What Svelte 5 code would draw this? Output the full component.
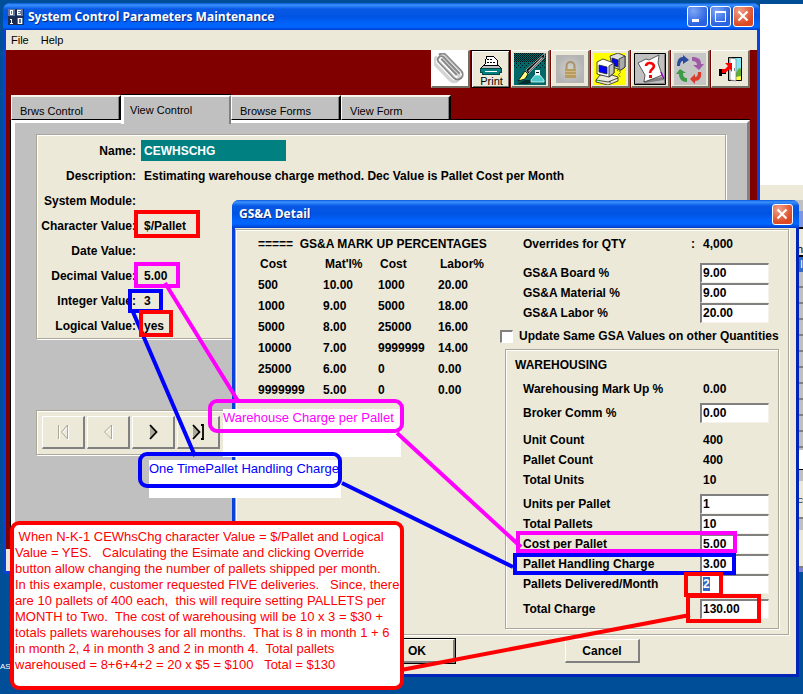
<script>
  const tabs = ['Brws Control', 'View Control', 'Browse Forms', 'View Form'];
  const fields = [
    ['Description:', 'Estimating warehouse charge method. Dec Value is Pallet Cost per Month'],
    ['System Module:', ''],
    ['Character Value:', '$/Pallet'],
    ['Date Value:', ''],
    ['Decimal Value:', '5.00'],
    ['Integer Value:', '3'],
    ['Logical Value:', 'yes']
  ];
  const markup = [
    ['500', '10.00', '1000', '20.00'],
    ['1000', '9.00', '5000', '18.00'],
    ['5000', '8.00', '25000', '16.00'],
    ['10000', '7.00', '9999999', '14.00'],
    ['25000', '6.00', '0', '0.00'],
    ['9999999', '5.00', '0', '0.00']
  ];
  const overrides = [
    ['board', 'GS&A Board %', '9.00'],
    ['material', 'GS&A Material %', '9.00'],
    ['labor', 'GS&A Labor %', '20.00']
  ];
  const counts = [
    ['Unit Count', '400'],
    ['Pallet Count', '400'],
    ['Total Units', '10']
  ];
  const pallets = [
    ['upp', 'Units per Pallet', '1'],
    ['total', 'Total Pallets', '10'],
    ['cost', 'Cost per Pallet', '5.00'],
    ['handling', 'Pallet Handling Charge', '3.00'],
    ['delivered', 'Pallets Delivered/Month', '2']
  ];
  const note = [
    ' When N-K-1 CEWhsChg character Value = $/Pallet and Logical',
    'Value = YES.   Calculating the Esimate and clicking Override',
    'button allow changing the number of pallets shipped per month.',
    'In this example, customer requested FIVE deliveries.   Since, there',
    'are 10 pallets of 400 each,  this will require setting PALLETS per',
    'MONTH to Two.  The cost of warehousing will be 10 x 3 = $30 +',
    'totals pallets warehouses for all months.  That is 8 in month 1 + 6',
    'in month 2, 4 in month 3 and 2 in month 4.  Total pallets',
    'warehoused = 8+6+4+2 = 20 x $5 = $100   Total = $130'
  ].join('\n');
</script>

<main class="desktop">
  <aside class="behind">
    <div class="blank"></div>
    <div class="strip beige"></div>
    <div class="strip grey"></div>
    <div class="strip lav"></div>
    <div class="strip head">h</div>
    <div class="strip sel">I</div>
    <div class="rows"></div>
    <div class="strip white"></div>
    <div class="strip grey"></div>
    <div class="strip foot">C</div>
    <div class="strip grey"></div>
    <div class="strip foot"></div>
  </aside>
  <span class="deskicon">AS</span>

  <section class="window main">
    <header class="title">
      <svg width="16" height="16" viewBox="0 0 16 16" shape-rendering="crispEdges">
        <path fill="#1b2b52" d="M0 0h16v16H0z" /><path fill="#62779a" d="M0 0h7v7H0zM9 0h6v7H9zM9 9h6v6H9z" />
        <path fill="none" stroke="#fff" d="M2.500 1.500h2v4h-2zM13 1.500h-3.500v4H13M10 3.500h2M2 10.500h1.500v4M2 14.500h3M10.500 9.500h3v5h-3z" />
      </svg>
      <h1>System Control Parameters Maintenance</h1>
      <button class="cap" aria-label="Minimize"><svg width="21" height="21"><path fill="#fff" d="M5 13h7v3H5z" /></svg></button>
      <button class="cap" aria-label="Maximize"><svg width="21" height="21"><path fill="none" stroke="#fff" d="M5 6.500h10M5.500 5v10.500h10V5M5 5.500h11" /></svg></button>
      <button class="cap close" aria-label="Close"><svg width="21" height="21"><path stroke="#fff" stroke-width="2.200" d="M5.500 5.500l9 9M14.500 5.500l-9 9" /></svg></button>
    </header>
    <nav class="menu"><button>File</button><button>Help</button></nav>
    <div class="client">
      <div class="tools">
        <button class="tool paper" aria-label="Attach">
          <svg width="32" height="32" viewBox="0 0 32 32" fill="none">
            <g transform="rotate(46 16 15)" stroke-linecap="round">
              <path stroke="#d4d4d4" stroke-width="3.500" d="M5 13h20a5 5 0 0 1 0 10H4a5 5 0 0 1-5-5" />
              <path stroke="#888" stroke-width="2" d="M26 12H4a3 3 0 0 0 0 7h22a5 5 0 0 0 0-10H3a5 5 0 0 0-4 4M4 15h21" />
              <path stroke="#c8c8c8" stroke-width="1" d="M3 10h23M4 18h22" />
            </g>
          </svg>
        </button>
        <button class="tool print">
          <svg width="32" height="22" viewBox="0 0 32 22" shape-rendering="crispEdges">
            <path fill="#fff" stroke="#000" d="M12.500 2.500h7l4 4v6h-13z" />
            <path stroke="#000" stroke-dasharray="2 1" d="M13 5.500h5M13 8.500h8" />
            <path fill="#c0c0c0" stroke="#000" d="M9.500 11.500h15l3 3h-21z" />
            <path fill="#008080" stroke="#004848" d="M6.500 14.500h21v4h-2v2h-17v-2h-2z" /><path fill="#fff" d="M11 17h12v1H11z" />
          </svg>
          <span>Print</span>
        </button>
        <button class="tool" aria-label="Sign">
          <svg width="32" height="32" viewBox="0 0 32 32">
            <defs><pattern id="dots" width="2" height="2" patternUnits="userSpaceOnUse"><path fill="#001818" d="M0 0h1v1H0zM1 1h1v1H1z" /></pattern>
            <pattern id="sparse" width="4" height="4" patternUnits="userSpaceOnUse"><path fill="#001818" d="M0 0h1v1H0zM2 2h1v1H2z" /></pattern></defs>
            <path fill="#006868" d="M0 0h32v32H0z" /><path fill="url(#dots)" d="M0 0h32v9H0z" /><path fill="url(#sparse)" d="M0 9h32v7H0z" />
            <path fill="#002c2c" d="M3 31l8-4h12l-9 4z" />
            <path fill="#000" stroke="#d8d8d8" stroke-width=".7" d="M31 0L12 17l2 4L30 5z" />
            <path fill="#c0c0c0" d="M28 4L14 18l1 1L29 5z" />
            <path fill="#ffff80" stroke="#000" stroke-width=".8" d="M11 18l3 3-3 5-7 2z" />
            <path fill="#fff" d="M21 17h5v5h-5z" /><path fill="#48c8c8" stroke="#fff" stroke-width=".7" d="M21 22h5l4 5v2H17v-2z" /><path fill="#000" d="M22 19h3v1h-3z" />
          </svg>
        </button>
        <button class="tool" aria-label="Lock">
          <svg width="32" height="32" viewBox="0 0 32 32">
            <defs><radialGradient id="lk"><stop offset="0" stop-color="#d2d1cd" /><stop offset="1" stop-color="#b4b4b4" /></radialGradient></defs>
            <path fill="url(#lk)" d="M2 2h28v28H2z" />
            <path fill="none" stroke="#a89468" stroke-width="2" d="M12.500 16v-3a4 4 0 0 1 8 0v3" />
            <path fill="#b89c60" d="M11 16h11v9H11z" /><path stroke="#cfb984" d="M11 18.500h11M11 21.500h11" />
          </svg>
        </button>
        <button class="tool" aria-label="Transfer">
          <svg width="32" height="32" viewBox="0 0 32 32">
            <path fill="#ff0" d="M0 0h32v32H0z" />
            <g stroke="#222" stroke-width=".8" stroke-linejoin="round">
              <path fill="#ddd" d="M16 3l8-3 7 3v11l-4 3-9-3z" /><path fill="#00f" d="M18 5l6 2v7l-6-2z" /><path fill="#aaa" d="M25 6l6-3v11l-4 3h-2z" />
              <path fill="#ece9d8" d="M2 27l4-5h12l6 2v4l-10 4-12-3z" /><path fill="none" d="M2 27l12 2 10-4M16 28v2" />
              <path fill="#fff" d="M3 9l6-3 11 4v10l-5 4-12-3z" /><path fill="#c0c0c0" d="M15 13l5-3v10l-5 4z" />
              <path fill="#00f" d="M5 12l8 2v7l-8-2z" />
            </g>
            <path fill="none" stroke="#333" stroke-dasharray="1 1" d="M23 17l4 2-3 3 3 2" /><path fill="#0d0" d="M3 27h2v1H3z" />
          </svg>
        </button>
        <button class="tool" aria-label="Help topic">
          <svg width="32" height="32" viewBox="0 0 32 32">
            <path fill="#c0c0c0" stroke="#000" d="M.5.5h31v31H.5z" /><path fill="none" stroke="#808080" d="M1.500 30.500h29v-29" />
            <path fill="#808080" d="M9 28l19-4 2 3-19 3z" />
            <path fill="#fff" stroke="#222" stroke-width=".7" d="M4 10l8-4 3 1 10-5-1 8 4 12-7 3-11 4 1-7z" />
            <path fill="none" stroke="#f00" stroke-width="2.600" d="M12 13c0-4 7-4 8 0 0 3-4 3-4 7" /><path fill="#f00" d="M15 22h3v3h-3z" />
            <path stroke="#a000c0" stroke-width="1.500" d="M27 19l3 7" />
          </svg>
        </button>
        <button class="tool" aria-label="Refresh">
          <svg width="32" height="32" viewBox="0 0 32 32">
            <path fill="#c6c6c6" d="M0 0h32v32H0z" />
            <path fill="#2b4a9b" d="M3 13C3 7 5 4 9 4V2l6 5-6 4V8C7 8 6 10 6 13z" />
            <path fill="#a05aa8" d="M18 4c6 0 9 2 9 7h3l-5 6-6-5h4c0-3-2-4-5-4z" />
            <path fill="#dc3c2c" d="M27 19c1 6-2 9-6 9v3l-5-5 5-5v3c2 0 3-2 3-5z" />
            <path fill="#3c9c44" d="M13 29c-5 0-8-3-8-8H2l4-5 6 4H9c0 3 1 5 4 5z" />
          </svg>
        </button>
        <button class="tool" aria-label="Exit">
          <svg width="32" height="32" viewBox="0 0 32 32">
            <path fill="#7fe8f4" stroke="#000" d="M14.500 4.500h13v23h-13z" />
            <path fill="#ff4" d="M22 23h5v4h-5z" /><path fill="#5cb030" d="M22 20l3-5 2 1v7l-5 1z" />
            <path fill="#fff" stroke="#777" stroke-width=".7" d="M16 5l6 1v22l-6-1z" /><path fill="#888" d="M20 15h1v3h-1z" />
            <path fill="#000" d="M5 16h3v7H5zM8 21h4v-4H8z" />
            <path fill="#f00" d="M8 16h3l3-3-3-3h7v9l-2-3-5 4H8z" />
          </svg>
        </button>
      </div>
      <div class="tabs" role="tablist">
        {#each tabs as t, i}
          <button role="tab" class:active={i === 1} aria-selected={i === 1}>{t}</button>
        {/each}
      </div>
      <div class="page">
        <div class="groove record">
          <label for="name">Name:</label>
          <input id="name" value="CEWHSCHG" />
          {#each fields as [k, v]}
            <span class="key">{k}</span><span>{v}</span>
          {/each}
        </div>
        <div class="groove nav">
          <button aria-label="First" disabled><svg width="16" height="16" fill="none" stroke="#aca899"><path stroke="#fff" d="M4.500 2v14M13.500 2v14l-6-7z" /><path d="M3.500 1v14M12.500 1v14l-6-7z" /></svg></button>
          <button aria-label="Previous" disabled><svg width="16" height="16" fill="none" stroke="#aca899"><path stroke="#fff" d="M12.500 2v14l-7-7z" /><path d="M11.500 1v14l-7-7z" /></svg></button>
          <button aria-label="Next"><svg width="16" height="16"><path fill="#aca899" d="M5 1v14l6-7z" /><path fill="none" stroke="#000" stroke-width="1.800" d="M5 1l6.500 7L5 15" /></svg></button>
          <button aria-label="Last"><svg width="16" height="16"><path fill="#aca899" d="M3 1v14l6-7z" /><path fill="none" stroke="#000" stroke-width="1.800" d="M3 1l6.500 7L3 15M11 1h2v14h-2" /></svg></button>
        </div>
      </div>
    </div>
    <footer class="status"></footer>
  </section>

  <section class="window dialog">
    <header class="title">
      <h2>GS&amp;A Detail</h2>
      <button class="cap close" aria-label="Close dialog"><svg width="21" height="21"><path stroke="#fff" stroke-width="2.200" d="M5.500 5.500l9 9M14.500 5.500l-9 9" /></svg></button>
    </header>
    <div class="body">
      <div class="groove detail">
        <div class="rates">
          <h3>=====&nbsp; GS&amp;A MARK UP PERCENTAGES</h3>
          <table>
            <thead><tr><th>Cost</th><th>Mat'l%</th><th>Cost</th><th>Labor%</th></tr></thead>
            <tbody>
              {#each markup as row}
                <tr>{#each row as c}<td>{c}</td>{/each}</tr>
              {/each}
            </tbody>
          </table>
        </div>
        <form class="over" onsubmit={(e) => e.preventDefault()}>
          <div class="row qty"><span>Overrides for QTY</span><span class="colon">:</span><span class="val">4,000</span></div>
          {#each overrides as [id, k, v]}
            <div class="row"><label for={id}>{k}</label><input {id} value={v} /></div>
          {/each}
          <div class="check"><input type="checkbox" id="same" /><label for="same">Update Same GSA Values on other Quantities</label></div>
          <div class="groove ware">
            <h3>WAREHOUSING</h3>
            <div class="row gap"><span>Warehousing Mark Up %</span><span class="val">0.00</span></div>
            <div class="row gap"><label for="broker">Broker Comm %</label><input id="broker" value="0.00" /></div>
            {#each counts as [k, v]}
              <div class="row"><span>{k}</span><span class="val">{v}</span></div>
            {/each}
            <div class="block">
              {#each pallets as [id, k, v]}
                <div class="row"><label for={id}>{k}</label><input {id} value={v} class:selected={id === 'delivered'} /></div>
              {/each}
            </div>
            <div class="row"><label for="charge">Total Charge</label><input id="charge" value="130.00" /></div>
          </div>
        </form>
      </div>
      <div class="actions"><button class="ok">OK</button><button>Cancel</button></div>
    </div>
  </section>

  <p class="memo pink">Warehouse Charge per Pallet</p>
  <p class="memo blue">One TimePallet Handling Charge</p>
  <p class="memo red">{note}</p>

  <svg class="marks" width="803" height="694" viewBox="0 0 803 694" fill="none" stroke-width="4">
    <g stroke="#f0f">
      <rect x="136" y="264" width="42" height="22" />
      <rect x="518" y="533" width="217" height="18" />
      <rect x="210" y="401" width="192" height="30" rx="7" />
      <path d="M165 283L238 401M397 433L521 547" />
    </g>
    <g stroke="#00f">
      <rect x="130" y="291" width="31" height="20" />
      <rect x="515" y="555" width="219" height="18" />
      <rect x="140" y="454" width="200" height="32" rx="7" />
      <path d="M133 312L195 456M342 483L513 567" />
    </g>
    <g stroke="#f00">
      <rect x="136" y="212" width="62" height="24" />
      <rect x="141" y="312" width="30" height="23" />
      <rect x="686" y="574" width="35" height="21" />
      <rect x="688" y="596" width="71" height="25" />
      <rect x="12" y="523" width="390" height="165" rx="7" />
      <path d="M401 670L690 615" />
    </g>
  </svg>
</main>

<style>
  :global(body) { background: #004e98; }
  .desktop {
    position: relative; min-height: 100vh; overflow: hidden; background: #004e98;
    font: bold 12px/20px "Liberation Sans", Arial, sans-serif; color: #000;
  }
  .desktop * { box-sizing: border-box; }
  h1, h2, h3, p { margin: 0; font: inherit; }
  button, input { font: inherit; color: inherit; border-radius: 0; }
  svg { display: block; flex: none; }

  .behind {
    position: absolute; left: 760px; right: 0; top: 4px; border-bottom: 4px solid #8080d0;
    background: #ece9d8; font-weight: normal; font-size: 11px; text-align: right;
  }
  .blank { height: 181px; background: #fff; }
  .strip { height: 15px; line-height: 20px; }
  .strip.grey { background: #c0c0c0; height: 11px; }
  .strip.lav { background: #7e96e0; height: 18px; border-bottom: 2px solid #000; }
  .strip.head { height: 28px; line-height: 40px; border-bottom: 2px solid #000; }
  .strip.sel { background: #316ac5; color: #fff; line-height: 15px; }
  .rows { height: 178px; background: repeating-linear-gradient(#c0c0c0 0 14px, #808080 14px 16px); }
  .strip.white { background: #fff; height: 20px; border-bottom: 1px solid #000; }
  .strip.foot { height: 38px; line-height: 40px; font-size: 8px; border-bottom: 2px solid #808080; }
  .deskicon { position: absolute; left: 0; top: 657px; color: #fff; font-weight: normal; font-size: 8px; }

  .window { position: absolute; border: 3px solid #0842d8; border-top: 0; border-radius: 7px 7px 0 0; background: #ece9d8; }
  .main { left: 3px; top: 3px; width: 757px; }
  .dialog { left: 232px; top: 200px; width: 567px; border-right-color: #0024b8; border-bottom-color: #0024b8; }
  .title {
    display: flex; align-items: center; gap: 2px; height: 27px; margin: 0 -3px; padding: 0 6px 0 5px; border-radius: 7px 7px 0 0;
    background: linear-gradient(#0a58d8, #3a92ff 2px, #0858e4 6px, #0054e3 14px, #0062fa 20px, #0066ff 24px, #003ccb);
    color: #fff; text-shadow: 1px 1px #0a2a80;
  }
  .title h1, .title h2 { flex: 1; font: bold 12px/20px "Open Sans", "Noto Sans", sans-serif; white-space: nowrap; padding-left: 2px; }
  .dialog .title { height: 28px; }
  .cap { width: 21px; height: 21px; padding: 0; border: 1px solid #fff; border-radius: 3px; background: radial-gradient(circle at 30% 20%, #7da6f5, #2a62e0 70%); }
  .cap svg { margin: -1px; }
  .close { background: radial-gradient(circle at 30% 20%, #f0a088, #dc4a24 70%); }
  .menu { display: flex; gap: 12px; height: 20px; padding-left: 5px; }
  .menu button { border: 0; padding: 0; background: none; font: 11px/18px "Liberation Sans", Arial, sans-serif; }
  .client { background: #800000; padding: 0 7px 3px 5px; }
  .tools { display: flex; justify-content: flex-end; gap: 1px; height: 45px; align-items: flex-start; }
  .tool { width: 39px; height: 38px; padding: 1px 0 0 2px; background: #ece9d8; border: 1px solid; border-color: #fff #716f64 #716f64 #fff; border-bottom-width: 2px; border-right-width: 2px; }
  .tool.paper { background: #fff; }
  .print { border-color: #000; border-width: 1px; box-shadow: inset 1px 1px #fff, inset -1px -1px #716f64; }
  .print span { display: block; font: 11px/10px "Liberation Sans", Arial, sans-serif; text-align: center; }
  .tabs { display: flex; height: 25px; }
  .tabs button {
    width: 110px; padding: 4px 8px 0; text-align: left; background: #c0c0c0; font: 11px/20px "Liberation Sans", Arial, sans-serif;
    border: solid; border-width: 2px 2px 1px 1px; border-color: #f4f2ea #000 #000 #fff; box-shadow: inset -1px 0 #808080;
  }
  .tabs .active { height: 29px; padding: 0 6px 2px; border-width: 2px 2px 0 3px; border-color: #fff #808080 #c0c0c0 #fff; box-shadow: 0 -1px #000; z-index: 1; position: relative; }
  .page {
    background: #c0c0c0; min-height: 426px; padding: 11px 21px; border: solid; border-width: 3px 3px 1px 4px;
    border-color: #fff #808080 #000 #fff; box-shadow: 0 -1px #000, -1px 0 #000;
  }
  .groove { border: 1px solid #aca899; box-shadow: inset 1px 1px #fff, 1px 1px #fff; background: #ece9d8; }
  .record { display: grid; grid-template-columns: 99px 1fr; column-gap: 8px; grid-auto-rows: 25px; align-items: center; height: 205px; padding: 3px 0 0; white-space: nowrap; }
  .record label, .key { text-align: right; }
  .record input { width: 145px; height: 21px; margin-left: -3px; padding: 0 3px; border: 0; background: #008080; color: #fff; }
  .nav { display: flex; gap: 2px; width: 194px; margin-top: 71px; padding: 5px; }
  .nav button, .actions button { border: solid; border-width: 1px 2px 2px 1px; border-color: #fff #808080 #808080 #fff; background: #ece9d8; }
  .nav button { width: 43px; height: 33px; padding: 0; display: grid; place-items: center; }
  .status { height: 22px; }

  .body { padding: 1px 7px 11px 0; }
  .detail { display: flex; justify-content: space-between; height: 406px; padding: 4px 9px 3px 22px; }
  .rates { white-space: nowrap; }
  table { border-collapse: collapse; table-layout: fixed; width: 230px; }
  th, td { padding: 0; text-align: left; height: 21px; line-height: 20px; }
  th { padding-left: 2px; height: 20px; }
  th:nth-child(1) { width: 65px; }
  th:nth-child(2) { width: 55px; }
  th:nth-child(3) { width: 60px; }
  .over { width: 282px; }
  .row { display: flex; align-items: center; height: 20px; padding: 0 10px 0 26px; white-space: nowrap; }
  .row label, .row > span:first-child { flex: 1; }
  .val { width: 66px; }
  .colon { width: 12px; }
  .qty { margin-bottom: 9px; }
  .row input { width: 69px; height: 20px; padding: 0 1px 2px; background: #fff; border: solid; border-width: 2px 1px 1px 2px; border-color: #808080 #f4f2ea #f4f2ea #808080; }
  .check { display: flex; align-items: center; gap: 6px; height: 26px; white-space: nowrap; }
  .check input { appearance: none; flex: none; width: 13px; height: 13px; margin: 0 0 0 3px; background: #fff; border: solid; border-width: 2px 1px 1px 2px; border-color: #808080 #fff #fff #808080; }
  .ware { margin-left: 8px; height: 280px; padding-top: 5px; width: 274px; }
  .ware h3 { padding-left: 9px; margin-bottom: 4px; }
  .ware .row { padding: 0 9px 0 17px; }
  .ware .gap { margin-bottom: 4px; }
  .ware .gap + .gap { margin-bottom: 7px; }
  .block { margin: 4px 0 5px; }
  .row .selected { color: #fff; background: linear-gradient(#316ac5, #316ac5) 1px 1px / 7px 14px no-repeat #fff; }
  .actions { display: flex; justify-content: flex-end; gap: 110px; padding: 4px 149px 0 0; }
  .actions button { width: 75px; height: 24px; padding: 0; }
  .actions .ok { outline: 1px solid #000; }

  .memo { position: absolute; background: #fff; font-weight: normal; font-size: 13px; line-height: 16px; white-space: pre; }
  .pink { left: 223px; top: 409px; width: 178px; height: 48px; padding-top: 1px; color: #f0f; }
  .blue { left: 149px; top: 460px; width: 192px; height: 38px; padding-top: 1px; color: #00f; }
  .red { left: 14px; top: 525px; width: 386px; height: 162px; padding: 4px 1px; color: #f00; }
  .marks { position: absolute; left: 0; top: 0; pointer-events: none; }
</style>
